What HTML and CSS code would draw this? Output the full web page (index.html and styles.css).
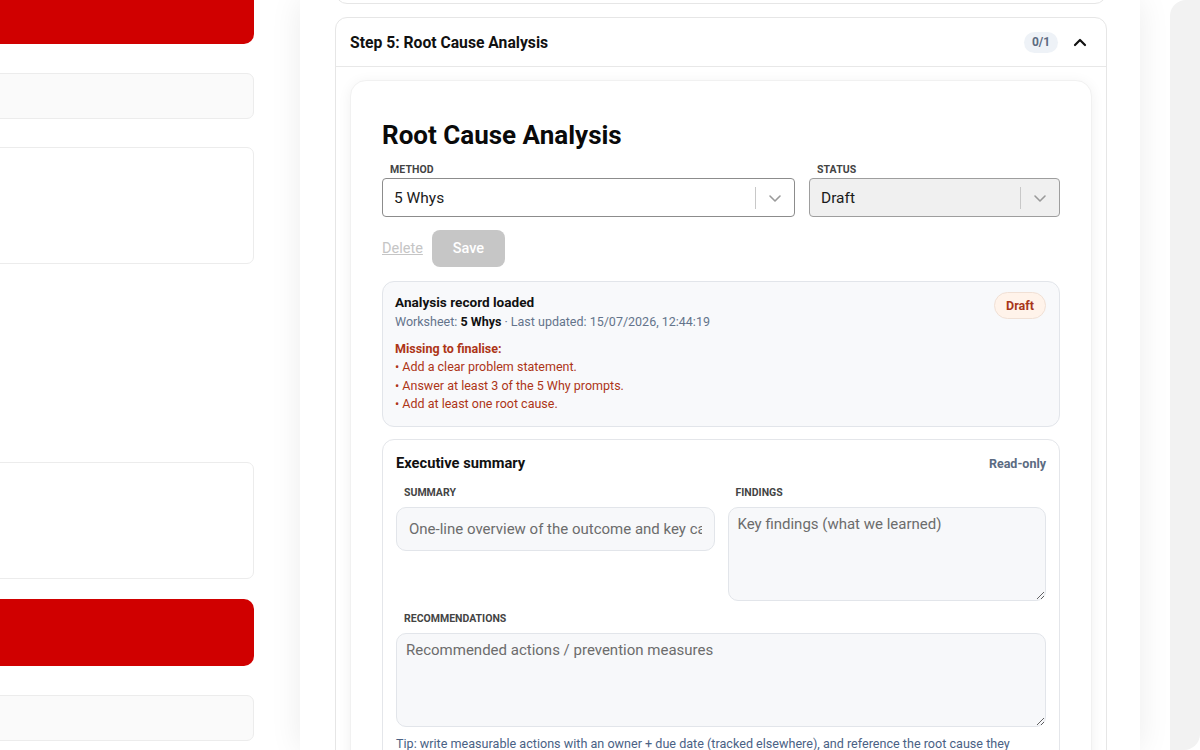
FILE: index.html
```html
<!DOCTYPE html>
<html lang="en">
<head>
<meta charset="utf-8">
<title>Root Cause Analysis</title>
<link rel="stylesheet" href="styles.css">
</head>
<body>
<div class="app">
  <aside class="side">
    <div class="side-btn side-btn-top"></div>
    <div class="side-box side-box-gray"></div>
    <div class="side-box side-box-tall"></div>
    <div class="side-spacer"></div>
    <div class="side-box side-box-tall"></div>
    <div class="side-btn"></div>
    <div class="side-box side-box-gray"></div>
  </aside>

  <main class="main">
    <div class="step step-prev"></div>

    <section class="step">
      <header class="step-head">
        <h2 class="step-title">Step 5: Root Cause Analysis</h2>
        <span class="step-count">0/1</span>
        <span class="step-toggle">
          <svg width="14" height="10" viewBox="0 0 14 10"><path d="M2 8 L7 3 L12 8" fill="none" stroke="#111" stroke-width="2.2" stroke-linecap="round" stroke-linejoin="round"/></svg>
        </span>
      </header>

      <div class="step-body">
        <div class="rca">
          <h1 class="rca-title">Root Cause Analysis</h1>

          <div class="field-row">
            <div class="field">
              <div class="field-label">METHOD</div>
              <div class="select">
                <span class="select-value">5 Whys</span>
                <span class="select-sep"></span>
                <span class="select-arrow">
                  <svg width="14" height="10" viewBox="0 0 14 10"><path d="M2 3 L7 8 L12 3" fill="none" stroke="#9a9a9a" stroke-width="1.6" stroke-linecap="round" stroke-linejoin="round"/></svg>
                </span>
              </div>
            </div>
            <div class="field">
              <div class="field-label">STATUS</div>
              <div class="select select-disabled">
                <span class="select-value">Draft</span>
                <span class="select-sep"></span>
                <span class="select-arrow">
                  <svg width="14" height="10" viewBox="0 0 14 10"><path d="M2 3 L7 8 L12 3" fill="none" stroke="#9a9a9a" stroke-width="1.6" stroke-linecap="round" stroke-linejoin="round"/></svg>
                </span>
              </div>
            </div>
          </div>

          <div class="actions">
            <a class="link-delete">Delete</a>
            <button class="btn-save" disabled>Save</button>
          </div>

          <div class="record">
            <div class="record-main">
              <div class="record-title">Analysis record loaded</div>
              <div class="record-meta">Worksheet: <b>5 Whys</b> · Last updated: 15/07/2026, 12:44:19</div>
              <div class="missing-title">Missing to finalise:</div>
              <ul class="missing-list">
                <li>• Add a clear problem statement.</li>
                <li>• Answer at least 3 of the 5 Why prompts.</li>
                <li>• Add at least one root cause.</li>
              </ul>
            </div>
            <span class="pill-draft">Draft</span>
          </div>

          <div class="exec">
            <div class="exec-head">
              <span class="exec-title">Executive summary</span>
              <span class="exec-ro">Read-only</span>
            </div>
            <div class="exec-grid">
              <div class="exec-field">
                <div class="exec-label">SUMMARY</div>
                <input class="exec-input" type="text" readonly placeholder="One-line overview of the outcome and key cause">
              </div>
              <div class="exec-field">
                <div class="exec-label">FINDINGS</div>
                <textarea class="exec-textarea exec-textarea-findings" readonly placeholder="Key findings (what we learned)"></textarea>
              </div>
            </div>
            <div class="exec-field exec-field-full">
              <div class="exec-label">RECOMMENDATIONS</div>
              <textarea class="exec-textarea" readonly placeholder="Recommended actions / prevention measures"></textarea>
            </div>
            <p class="exec-tip">Tip: write measurable actions with an owner + due date (tracked elsewhere), and reference the root cause they address.</p>
          </div>
        </div>
      </div>
    </section>
  </main>

  <div class="rail"></div>
</div>
</body>
</html>
```

FILE: styles.css
```css
* { box-sizing: border-box; }

html, body {
  margin: 0;
  padding: 0;
  height: 750px;
  overflow: hidden;
  background: #ffffff;
  font-family: Roboto, "Liberation Sans", Arial, sans-serif;
  color: #111;
}

.app {
  display: flex;
  height: 750px;
  overflow: hidden;
}

/* ---------- left column ---------- */
.side {
  width: 286px;
  flex: none;
  display: flex;
  flex-direction: column;
  padding-right: 32px;
  margin-right: 14px;
  background: #fff;
}

.side-btn {
  height: 67px;
  margin-left: -20px;
  background: #d00000;
  border-radius: 10px;
  flex: none;
}
.side-btn-top {
  margin-top: -23px;
}
.side-box {
  flex: none;
  margin-left: -20px;
  border: 1px solid #ececec;
  border-radius: 7px;
  background: #fff;
}
.side-box-gray {
  height: 46px;
  background: #fafafa;
}
.side-box-tall {
  height: 117px;
}
.side-btn + .side-box-gray { margin-top: 29px; }
.side-box-gray + .side-box-tall { margin-top: 28px; }
.side-spacer { height: 198px; flex: none; }
.side-box-tall + .side-btn { margin-top: 20px; }

/* ---------- main panel ---------- */
.main {
  width: 840px;
  flex: none;
  background: #fff;
  box-shadow: 0 0 30px rgba(0, 0, 0, 0.08);
  padding: 0 33px 0 35px;
  position: relative;
  z-index: 1;
}

.step {
  border: 1px solid #e6e6e6;
  border-radius: 12px;
  background: #fff;
}
.step-prev {
  height: 34px;
  margin-top: -30px;
  margin-bottom: 13px;
}

.step-head {
  height: 49px;
  display: flex;
  align-items: center;
  padding: 0 19px 0 14px;
  border-bottom: 1px solid #e8e8e8;
}
.step-title {
  margin: 0;
  font-size: 15.7px;
  font-weight: 700;
  color: #111;
}
.step-count {
  margin-left: auto;
  height: 21px;
  min-width: 34px;
  padding: 0 7px;
  border-radius: 11px;
  background: #eef2f7;
  color: #5d6b80;
  font-size: 12px;
  font-weight: 700;
  display: flex;
  align-items: center;
  justify-content: center;
}
.step-toggle {
  margin-left: 15px;
  width: 14px;
  height: 10px;
  display: flex;
}

.step-body {
  padding: 13px 14px 0 14px;
}

.rca {
  border-radius: 16px;
  border: 1px solid #f1f1f1;
  box-shadow: 0 2px 14px rgba(0, 0, 0, 0.06);
  padding: 37px 31px 40px 31px;
  background: #fff;
}

.rca-title {
  margin: 0;
  font-size: 26px;
  line-height: 34px;
  font-weight: 700;
  color: #0a0a0a;
}

.field-row {
  display: grid;
  grid-template-columns: 1fr 251px;
  column-gap: 14px;
  margin-top: 11px;
}
.field-label {
  padding-left: 8px;
  font-size: 10.5px;
  font-weight: 700;
  color: #444;
  line-height: 13px;
  margin-bottom: 2px;
  letter-spacing: 0.1px;
}
.select {
  height: 39px;
  border: 1px solid #8c8c8c;
  border-radius: 4px;
  display: flex;
  align-items: center;
  padding-left: 11px;
  background: #fff;
}
.select-disabled {
  background: #f0f0f0;
  border-color: #9e9e9e;
}
.select-value {
  flex: 1;
  font-size: 15.5px;
  color: #1a1a1a;
}
.select-sep {
  width: 1px;
  height: 22px;
  background: #c8c8c8;
}
.select-arrow {
  width: 38px;
  display: flex;
  justify-content: center;
}

.actions {
  display: flex;
  align-items: center;
  gap: 9px;
  margin-top: 13px;
}
.link-delete {
  font-size: 14.5px;
  color: #c5c5c5;
  text-decoration: underline;
}
.btn-save {
  width: 73px;
  height: 37px;
  border: none;
  border-radius: 8px;
  background: #c6c6c6;
  color: #fff;
  font-family: inherit;
  font-size: 14.5px;
  font-weight: 500;
}

.record {
  margin-top: 14px;
  display: flex;
  align-items: flex-start;
  border: 1px solid #e2e5ea;
  border-radius: 12px;
  background: #f8f9fb;
  padding: 10px 13px 12px 12px;
}
.record-main { flex: 1; }
.record-title {
  font-size: 13.6px;
  font-weight: 700;
  line-height: 20px;
  color: #111;
}
.record-meta {
  font-size: 12.5px;
  line-height: 20px;
  color: #64748b;
}
.record-meta b { color: #111; }
.missing-title {
  margin-top: 7px;
  font-size: 12.5px;
  font-weight: 700;
  line-height: 19px;
  color: #ad3517;
}
.missing-list {
  list-style: none;
  margin: 0;
  padding: 0;
}
.missing-list li {
  font-size: 12.5px;
  line-height: 18.7px;
  color: #ad3517;
}
.pill-draft {
  flex: none;
  height: 27px;
  padding: 0 11px;
  display: flex;
  align-items: center;
  border-radius: 14px;
  background: #fff3ea;
  border: 1px solid #f0e0d5;
  color: #a8361a;
  font-size: 12.5px;
  font-weight: 700;
  margin-top: 0;
}

.exec {
  margin-top: 12px;
  border: 1px solid #e4e6ea;
  border-radius: 12px;
  background: #fff;
  padding: 12px 13px 12px 13px;
}
.exec-head {
  display: flex;
  align-items: center;
  justify-content: space-between;
  height: 22px;
}
.exec-title {
  font-size: 14.7px;
  font-weight: 700;
  color: #111;
}
.exec-ro {
  font-size: 12.5px;
  font-weight: 700;
  color: #5b6b82;
}
.exec-grid {
  display: grid;
  grid-template-columns: 1fr 1fr;
  column-gap: 13px;
  margin-top: 12px;
}
.exec-field-full { margin-top: 11px; }
.exec-label {
  padding-left: 8px;
  font-size: 10.5px;
  font-weight: 700;
  color: #444;
  line-height: 13px;
  margin-bottom: 8px;
}
.exec-input,
.exec-textarea {
  display: block;
  width: 100%;
  border: 1px solid #e2e5ea;
  border-radius: 10px;
  background: #f7f8fa;
  font-family: inherit;
  font-size: 15px;
  color: #333;
  outline: none;
}
.exec-input {
  height: 44px;
  padding: 0 12px;
}
.exec-textarea {
  height: 94px;
  padding: 6px 9px;
  line-height: 20px;
  resize: vertical;
}
.exec-input::placeholder,
.exec-textarea::placeholder {
  color: #6c6c6c;
}
.exec-tip {
  margin: 8px 0 0 0;
  font-size: 12.6px;
  line-height: 18px;
  color: #4a6285;
}

/* ---------- right rail ---------- */
.rail {
  margin-left: 30px;
  flex: 1;
  background: #f2f2f2;
  border-radius: 16px 0 16px 0;
}
```
